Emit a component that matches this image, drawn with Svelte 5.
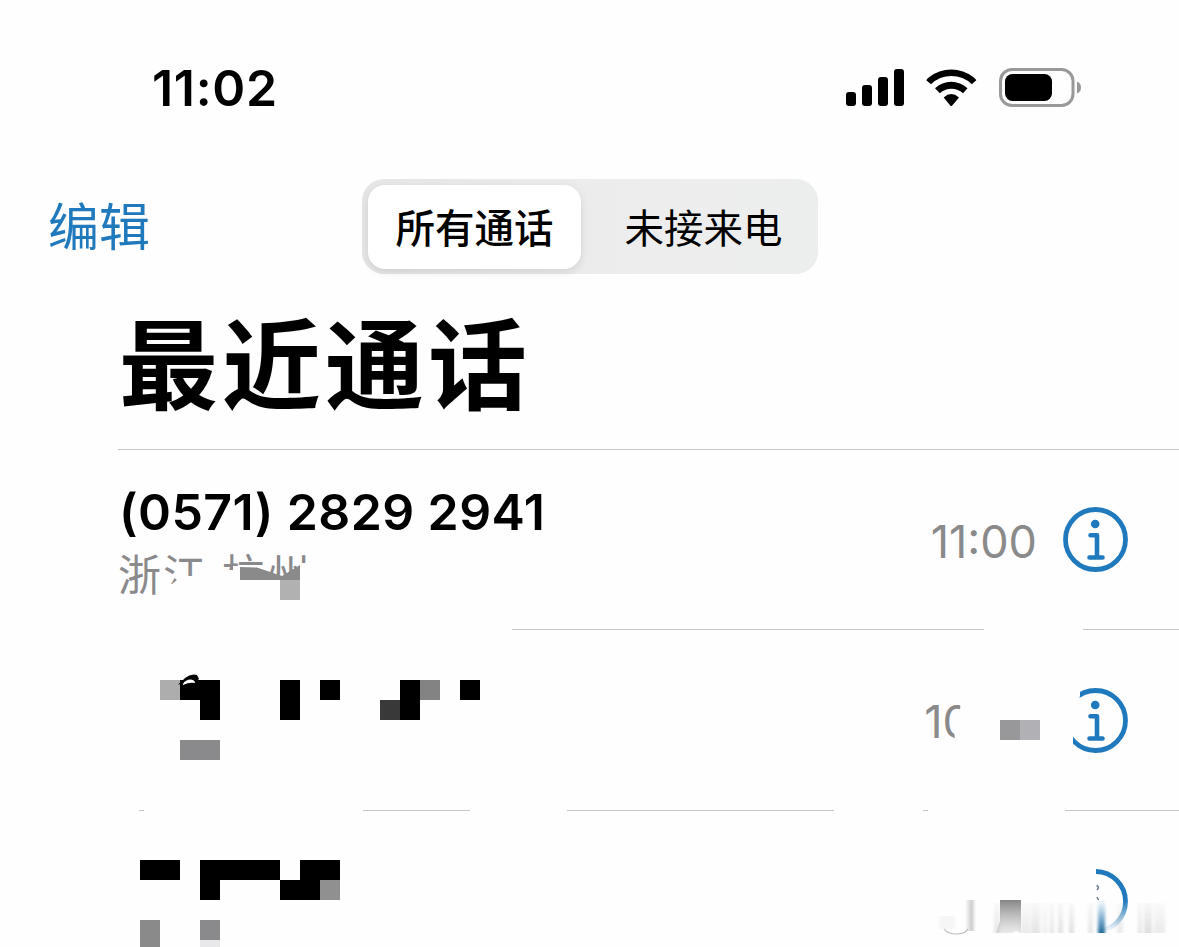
<script>
	/**
	 * @typedef {{x:number,y:number,w:number,h:number,fill:string}} block
	 * @typedef {{number:string,place:string,time:string,blocks:block[],lines:number[][]}} call
	 */

	/** @type {call[]} */
	const calls = [
		{
			number: '(0571) 2829 2941',
			place: '浙江 杭州',
			time: '11:00',
			blocks: [{ x: 280, y: 130, w: 20, h: 20, fill: '#b1b1b1' }],
			lines: [
				[512, 984],
				[1083, 1179]
			]
		},
		{
			number: '',
			place: '',
			time: '10',
			blocks: [
				{ x: 160, y: 50, w: 20, h: 20, fill: '#adadad' },
				{ x: 180, y: 50, w: 40, h: 20, fill: '#000' },
				{ x: 200, y: 70, w: 20, h: 20, fill: '#000' },
				{ x: 280, y: 50, w: 20, h: 40, fill: '#000' },
				{ x: 320, y: 50, w: 20, h: 20, fill: '#000' },
				{ x: 380, y: 70, w: 20, h: 20, fill: '#393939' },
				{ x: 400, y: 50, w: 20, h: 40, fill: '#000' },
				{ x: 420, y: 50, w: 20, h: 20, fill: '#838383' },
				{ x: 460, y: 50, w: 20, h: 20, fill: '#000' },
				{ x: 180, y: 110, w: 40, h: 20, fill: '#8a8a8d' },
				{ x: 1000, y: 90, w: 20, h: 20, fill: '#98989a' },
				{ x: 1020, y: 90, w: 20, h: 20, fill: '#b1b0b4' }
			],
			lines: [
				[139, 144],
				[363, 470],
				[567, 834],
				[923, 928],
				[1065, 1179]
			]
		},
		{
			number: '',
			place: '',
			time: '',
			blocks: [
				{ x: 140, y: 49, w: 40, h: 20, fill: '#000' },
				{ x: 200, y: 49, w: 80, h: 20, fill: '#000' },
				{ x: 200, y: 69, w: 20, h: 20, fill: '#000' },
				{ x: 300, y: 49, w: 40, h: 20, fill: '#000' },
				{ x: 280, y: 69, w: 40, h: 20, fill: '#000' },
				{ x: 320, y: 69, w: 20, h: 20, fill: '#909090' },
				{ x: 140, y: 109, w: 20, h: 27, fill: '#8a8a8a' },
				{ x: 200, y: 109, w: 20, h: 20, fill: '#8a8a8d' },
				{ x: 200, y: 129, w: 20, h: 7, fill: '#e8e8ea' }
			],
			lines: []
		}
	];

	// faint streaks at the bottom right: x, width, opacity
	const streaks = [
		[994, 6, 0.2],
		[1021, 9, 0.17],
		[1031, 9, 0.22],
		[1042, 6, 0.12],
		[1050, 4, 0.22],
		[1058, 5, 0.24],
		[1069, 5, 0.25],
		[1088, 5, 0.2],
		[1117, 6, 0.17],
		[1138, 4, 0.22],
		[1144, 8, 0.27],
		[1154, 11, 0.17]
	];
</script>

<div class="phone">
	<header class="status">
		<span class="clock">11:02</span>
		<svg class="signals" width="236" height="40" viewBox="0 0 236 40">
			<rect x="1" y="24" width="10" height="14" rx="3" />
			<rect x="17" y="17" width="10" height="21" rx="3" />
			<rect x="33" y="9" width="10" height="29" rx="3" />
			<rect x="49" y="1" width="10" height="37" rx="3" />
			<path d="M81.300 12.200Q82 10.800 84 9.300A36 36 0 0 1 128.500 9.300Q130.500 10.800 131.300 12.200L126.800 16.300A29 29 0 0 0 86 16.300Z" />
			<path d="M90 20.200A24 24 0 0 1 122.500 20.200L118 25.200A17 17 0 0 0 94.800 25.200Z" />
			<path d="M98.700 29.400Q106.200 22.800 114 29.400L107.200 37.400Q106.200 38.500 105.200 37.400Z" />
			<rect x="155.500" y="1.500" width="72.500" height="36" rx="11.500" fill="none" stroke="#999" stroke-width="3" />
			<rect x="160" y="6" width="47" height="27" rx="7.500" />
			<path d="M232 13.500Q236 15 236 19.500T232 25.500Z" fill="#999" />
		</svg>
	</header>

	<nav>
		<span class="edit">编辑</span>
		<div class="tabs">
			<span class="tab active">所有通话</span>
			<span class="tab">未接来电</span>
		</div>
	</nav>

	<h1>最近通话</h1>

	<main>
		{#each calls as call, index}
			<section class="call call{index}">
				<div class="who">
					<span class="number">{call.number}</span>
					<span class="place">{call.place}</span>
				</div>
				<span class="time">{call.time}</span>
				<svg class="info" width="66" height="66" viewBox="0 0 66 66">
					<circle cx="32.500" cy="32.500" r="30" fill="none" stroke="#2079bd" stroke-width="4.800" />
					<circle cx="32.200" cy="17" r="4.300" fill="#2079bd" />
					<path d="M27.500 28.300H34V50M26.500 50.500H39.500" fill="none" stroke="#2079bd" stroke-width="4.600" stroke-linecap="round" stroke-linejoin="round" />
				</svg>

				<svg class="cover" width="1179" height="181" viewBox="0 0 1179 181">
					{#each call.blocks as block}
						<rect x={block.x} y={block.y} width={block.w} height={block.h} fill={block.fill} />
					{/each}
					{#each call.lines as [from, to]}
						<rect x={from} y={index === 0 ? 179 : 180} width={to - from} height="1" fill="#c6c6c8" />
					{/each}
					{#if index === 0}
						<path d="M240 117L257 117.500L282 126L300 115V130H240Z" fill="#8a8a8a" />
					{:else if index === 1}
						<path d="M178 54.500Q183 50 185 48Q191 43 197 45L199 49L196 52Q189 49 183 54Z" />
						<path d="M183 54Q185 49.500 191 49.500Q195 50 195 53Q189 52 183 55Z" fill="#fff" />
					{:else}
						<defs>
							<linearGradient id="dark" x2="0" y2="1">
								<stop stop-color="#858585" />
								<stop offset="1" stop-color="#bbb" stop-opacity="0.300" />
							</linearGradient>
							<linearGradient id="light" x2="0" y2="1">
								<stop stop-color="#888" stop-opacity="0.200" />
								<stop offset="1" stop-color="#888" />
							</linearGradient>
							<linearGradient id="blue" x2="0" y2="1">
								<stop stop-color="#2079bd" stop-opacity="0" />
								<stop offset="1" stop-color="#20699a" />
							</linearGradient>
							<linearGradient id="edge">
								<stop stop-color="#777" stop-opacity="0" />
								<stop offset="0.600" stop-color="#777" stop-opacity="0.350" />
								<stop offset="1" stop-color="#777" stop-opacity="0" />
							</linearGradient>
							<filter id="soft"><feGaussianBlur stdDeviation="1.600 0.500" /></filter>
						</defs>
						<rect x="965" y="89" width="11" height="31" fill="url(#edge)" />
						<path d="M944 118Q948 123 956 123Q965 123 968 118" fill="none" stroke="#bbb" stroke-width="1.200" />
						<rect x="939" y="105" width="16" height="13" fill="#888" opacity="0.060" filter="url(#soft)" />
						<path d="M1000 89H1021V122L1016 120L1012 122H996L1000 110Z" fill="url(#dark)" />
						<g filter="url(#soft)">
							{#each streaks as [x, width, opacity]}
								<rect {x} y="92" {width} height="30" fill="url(#light)" {opacity} />
							{/each}
							<rect x="1098" y="89" width="7" height="33" fill="url(#blue)" />
						</g>
						<path d="M1096.500 74.500Q1100 76 1097 79M1097 86L1098.500 89" fill="none" stroke="#678" stroke-width="1.500" />
					{/if}
				</svg>
			</section>
		{/each}
	</main>
</div>

<style>
	:global(body) {
		background: #fefefe;
		overflow: hidden;
	}
	.phone {
		width: 1179px;
		height: 947px;
		overflow: hidden;
		display: flex;
		flex-direction: column;
		background: #fefefe;
		color: #000;
		font-family: Inter, 'Noto Sans CJK SC', sans-serif;
		line-height: 1;
	}
	.status {
		height: 112px;
		padding: 68px 98px 0 152px;
		box-sizing: border-box;
		display: flex;
		justify-content: space-between;
		flex: none;
	}
	.clock {
		font-size: 50px;
		line-height: 40px;
		font-weight: 600;
		letter-spacing: 0.7px;
	}
	nav {
		height: 95px;
		margin-top: 67px;
		display: flex;
		flex: none;
	}
	.edit {
		width: 314px;
		padding-left: 48px;
		font-size: 51px;
		line-height: 98px;
		color: #2079bd;
	}
	.tabs {
		width: 456px;
		height: 95px;
		padding: 6px;
		box-sizing: border-box;
		display: flex;
		gap: 16px;
		border-radius: 22px;
		background: linear-gradient(90deg, #e6e6e6, #ededed 60%, #eceeed);
	}
	.tab {
		width: 213px;
		text-align: center;
		font-size: 39.5px;
		line-height: 89px;
		border-radius: 17px;
	}
	.active {
		font-weight: 500;
		background: #fff;
		height: 84px;
		box-shadow: 0 3px 8px rgba(0, 0, 0, 0.1);
	}
	h1 {
		margin: 0;
		height: 175px;
		padding: 43px 0 0 119px;
		box-sizing: border-box;
		font-size: 99px;
		line-height: 99px;
		font-weight: 700;
		letter-spacing: 4px;
		flex: none;
	}
	main {
		position: relative;
		border-top: 1px solid #c6c6c8;
		margin-left: 118px;
	}
	.call {
		position: relative;
		height: 181px;
		padding-right: 50px;
		display: flex;
		align-items: center;
	}
	.call0 {
		height: 180px;
	}
	.who {
		flex: 1;
		height: 114px;
		display: flex;
		flex-direction: column;
	}
	.number {
		font-size: 50px;
		line-height: 58px;
		height: 58px;
		padding-left: 1px;
		font-weight: 600;
		letter-spacing: 0.4px;
		white-space: nowrap;
	}
	.place {
		font-size: 43px;
		line-height: 68px;
		letter-spacing: 1.9px;
		color: #8a8a8d;
		clip-path: polygon(0 0, 200px 0, 200px 22px, 184px 22px, 180px 40px, 122px 36px, 122px 25px, 115px 25px, 115px 29px, 89px 29px, 89px 35px, 64px 35px, 54px 43px, 44px 43px, 44px 68px, 0 68px);
	}
	.time {
		font-size: 45px;
		line-height: 50px;
		padding-top: 3px;
		color: #8a8a8a;
		margin-right: 26px;
	}
	.call1 .time {
		margin-right: 92px;
		clip-path: polygon(0 0, 36px 0, 36px 14px, 28px 27px, 32px 100%, 0 100%);
	}
	.call1 .info {
		clip-path: polygon(17px 0, 100% 0, 100% 100%, 10px 100%, 10px 42px, 17px 8px);
	}
	.call2 .info {
		clip-path: inset(0 0 0 33px);
		mask-image: linear-gradient(#000 48%, transparent 95%);
	}
	.call2 .info path,
	.call2 .info circle:nth-child(2) {
		display: none;
	}
	.cover {
		position: absolute;
		top: 0;
		left: -118px;
	}
</style>
